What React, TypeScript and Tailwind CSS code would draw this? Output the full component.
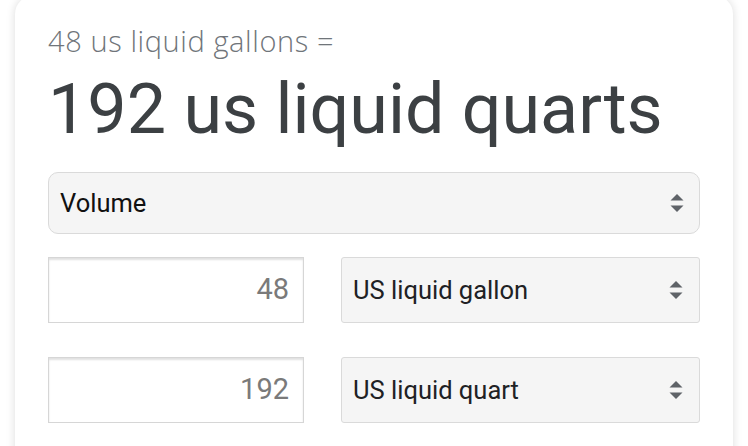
import React from "react";

function Arrows() {
  return (
    <svg width="16" height="26" viewBox="0 0 16 26" className="shrink-0">
      <path d="M8 4 L14.5 10.5 L1.5 10.5 Z" fill="#5f6368" />
      <path d="M1.5 15.5 L14.5 15.5 L8 22 Z" fill="#5f6368" />
    </svg>
  );
}

function NumBox({ value }: { value: string }) {
  return (
    <div className="w-[256px] h-[66px] border border-[#d6d6d6] shadow-[inset_0_2px_2px_rgba(0,0,0,0.12)] flex items-center justify-end pr-[14px] text-[29px] text-[#7a7a7a] bg-white">
      {value}
    </div>
  );
}

function UnitSel({ label }: { label: string }) {
  return (
    <div className="w-[359px] h-[66px] border border-[#dadada] rounded-[3px] bg-[#f5f5f5] flex items-center justify-between pl-[11px] pr-[15px] text-[25.5px] text-[#202124]">
      <span>{label}</span>
      <Arrows />
    </div>
  );
}

export default function App() {
  return (
    <div className="w-[748px] h-[446px] bg-white overflow-hidden px-[15px]" style={{ fontFamily: "Roboto, 'Liberation Sans', sans-serif" }}>
      <div className="h-[470px] -mt-[4px] rounded-t-[18px] bg-white shadow-[0_0_10px_rgba(0,0,0,0.14)] px-[33px] pt-[28px]">
        <div className="text-[29px] font-light tracking-[0.6px] text-[#70757a] leading-[34px]" style={{ fontFamily: "'Open Sans', Roboto, sans-serif" }}>48 us liquid gallons =</div>
        <div className="text-[70px] text-[#3c4043] leading-[80px] mt-[11px]">192 us liquid quarts</div>
        <div className="mt-[23px] h-[62px] w-[652px] rounded-[10px] border border-[#dadada] bg-[#f5f5f5] flex items-center justify-between pl-[11px] pr-[14px] text-[25.5px] text-[#111]">
          <span>Volume</span>
          <Arrows />
        </div>
        <div className="mt-[23px] flex gap-[37px]">
          <NumBox value="48" />
          <UnitSel label="US liquid gallon" />
        </div>
        <div className="mt-[34px] flex gap-[37px]">
          <NumBox value="192" />
          <UnitSel label="US liquid quart" />
        </div>
      </div>
    </div>
  );
}
